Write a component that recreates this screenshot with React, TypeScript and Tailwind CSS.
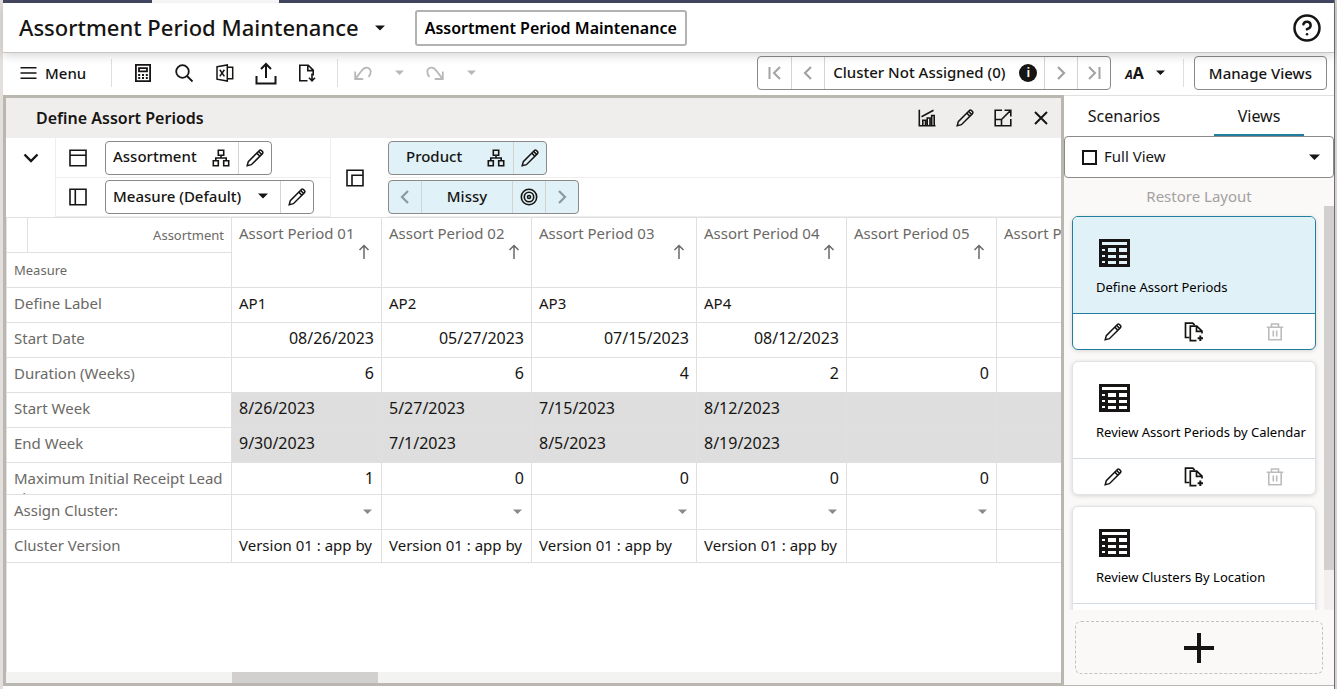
import type { ReactNode } from "react";
import { CircleHelp } from "lucide-react";

type IconProps = { className?: string };

function Svg({ className = "size-5", width = "1.6", children }: IconProps & { width?: string; children: ReactNode }) {
  return (
    <svg viewBox="0 0 20 20" className={`shrink-0 ${className}`} fill="none" stroke="currentColor" strokeWidth={width} aria-hidden="true">
      {children}
    </svg>
  );
}

const Caret = ({ className = "w-[9px]" }: IconProps) => (
  <svg viewBox="0 0 10 6" className={`shrink-0 ${className}`} fill="currentColor" aria-hidden="true">
    <path d="M0 0.5h10L5 5.5z" />
  </svg>
);

const Pencil = ({ className }: IconProps) => (
  <Svg className={className} width="1.5">
    <path d="M2.2 17.8l1.1-4.2L14.4 2.5a1.4 1.4 0 0 1 2 0l1.1 1.1a1.4 1.4 0 0 1 0 2L6.4 16.7z" />
    <path d="M11.8 5.1l3.1 3.1M13.6 3.4l3.1 3.1" />
  </Svg>
);

const Hierarchy = () => (
  <Svg>
    <path d="M7.3 2.3h5.4v5H7.3zM2.3 12.7h5v5h-5zM12.7 12.7h5v5h-5zM10 7.3V10M4.8 12.7V10h10.4v2.7" />
  </Svg>
);

const ChevronLeft = () => (
  <Svg width="2.2">
    <path d="M13 4l-6 6 6 6" />
  </Svg>
);

const ChevronRight = () => (
  <Svg width="2.2">
    <path d="M7 4l6 6-6 6" />
  </Svg>
);

const Calculator = () => (
  <Svg width="1.8">
    <path d="M2.9 1.9h14.2v16.2H2.9z" />
    <path d="M6 5.2h8v3.2H6z" />
    <path d="M5.2 12h2m1.8 0h2m1.8 0h2M5.2 15h2m1.8 0h2m1.8 0h2" />
  </Svg>
);

const Search = () => (
  <Svg width="1.8">
    <circle cx="8.5" cy="8.5" r="6.3" />
    <path d="M13 13l5.5 5.5" />
  </Svg>
);

const Excel = () => (
  <Svg width="1.5">
    <path d="M2 3.8L12.3 2v16L2 16.2zM12.3 4.3h5.4v11.4h-5.4" />
    <path d="M4.8 6.8l4.6 6.6M9.4 6.8l-4.6 6.6" />
  </Svg>
);

const Upload = () => (
  <svg viewBox="0 0 24 24" className="size-6 shrink-0" fill="none" stroke="currentColor" strokeWidth="2" aria-hidden="true">
    <path d="M2.5 15v7.5h19V15M12 17V3M7 8l5-5 5 5" />
  </svg>
);

const DocumentDown = () => (
  <Svg>
    <path d="M10.5 17.7H2.8V2.2h8.4l5 5v5.3M10.8 2.2v5.4h5.4" />
    <path d="M15 10.5v7M12 14.8l3 3 3-3" />
  </Svg>
);

const Undo = () => (
  <Svg width="1.8">
    <path d="M2.2 8.5v7.500h8M2.6 15.600L8 8.500c2-3 4.500-4.500 7-3.700C18.500 6 18.500 10.500 15.500 14" />
  </Svg>
);

const Redo = () => (
  <Svg width="1.8">
    <path d="M17.800 8.500V16h-8M17.400 15.600L12 8.500C10 5.500 7.500 4 5 4.800 1.500 6 1.500 10.500 4.500 14" />
  </Svg>
);

const FirstPage = () => (
  <Svg width="2">
    <path d="M4.500 4v12M15 4l-6 6 6 6" />
  </Svg>
);

const LastPage = () => (
  <Svg width="2">
    <path d="M15.500 4v12M5 4l6 6-6 6" />
  </Svg>
);

const Chart = () => (
  <Svg>
    <path d="M2.300 1.800v15.900h16.200M5.800 17.700v-5.500h2.700v5.500M10.200 17.700V10H13v7.700M14.700 17.700V7.500h2.500v10.200M4.500 8.800L16.500 2.300" />
  </Svg>
);

const Expand = () => (
  <Svg>
    <path d="M9 2.200H2.200v15.600h15.600V11M11.500 2.200h6.300v6.300M17.500 2.500L9 11M2.200 11.500h6.300v6.300" />
  </Svg>
);

const Close = () => (
  <Svg width="2">
    <path d="M4 4l12 12M16 4L4 16" />
  </Svg>
);

const RowsLayout = () => (
  <Svg>
    <path d="M2 2.300h16v15.400H2zM2 7.200h16" />
  </Svg>
);

const ColumnsLayout = () => (
  <Svg>
    <path d="M2 2.300h16v15.400H2zM7.300 2.300v15.400" />
  </Svg>
);

const PageLayout = () => (
  <Svg>
    <path d="M2 2.300h16v15.400H2zM7 17.700V7.300h11" />
  </Svg>
);

const Target = () => (
  <Svg>
    <circle cx="10" cy="10" r="7.700" />
    <circle cx="10" cy="10" r="4.700" />
    <circle cx="10" cy="10" r="1.500" />
  </Svg>
);

const Duplicate = () => (
  <Svg width="1.700">
    <path d="M5.500 15.500H1.500V1.200h7.200l2 2" />
    <path d="M12.500 18.600H6.300V4.200h6.500l5.200 5v2.300M12.500 4.200v5.200H18" />
    <path d="M16.300 13.500v5.400M13.600 16.200h5.400" strokeWidth="2" />
  </Svg>
);

const Trash = () => (
  <Svg>
    <path d="M1.800 5.300h16.400M6.500 5V2h7v3M3.800 5.500v12.200h12.400V5.500M8.300 8.500v6M11.700 8.500v6" />
  </Svg>
);

const TableIcon = () => (
  <svg viewBox="0 0 31 28" className="h-7 w-[31px] shrink-0" shapeRendering="crispEdges" aria-hidden="true">
    <path d="M0 0h31v28H0z" fill="#161513" />
    <path
      d="M3 3h25v3H3zM3 10h3v2H3zM9 9h8v4H9zM20 9h8v4h-8zM3 16h3v2H3zM9 16h8v3H9zM20 16h8v3h-8zM3 22h3v2H3zM9 22h8v3H9zM20 22h8v3h-8z"
      className="fill-current"
    />
  </svg>
);

const outline = "flex h-[34px] items-stretch overflow-hidden rounded-[4px] border border-[#8b8a89]";
const segment = "flex w-[33px] items-center justify-center border-l border-[#d5d3d1]";

function Divider() {
  return <span className="h-7 w-px bg-[#e0dedc]" />;
}

function Header() {
  return (
    <>
      <div className="flex h-[3px] shrink-0 bg-[#454863]">
        <span className="ml-[149px] w-[127px] bg-white" />
      </div>
      <header className="relative z-10 flex h-[50px] shrink-0 items-center border-b border-[#c8c6c4] bg-white px-4 shadow-[0_2px_10px_rgba(0,0,0,0.18)]">
        <h1>
          <button className="flex items-center gap-4 text-[22px] font-medium">
            Assortment Period Maintenance
            <Caret className="w-[10px]" />
          </button>
        </h1>
        <button className="ml-[30px] h-9 rounded-[3px] border-2 border-[#b3b2b1] px-2 text-base font-semibold text-black">
          Assortment Period Maintenance
        </button>
        <button aria-label="Help" className="-mr-2 ml-auto">
          <CircleHelp className="mr-1 size-[30px]" strokeWidth={2} />
        </button>
      </header>
    </>
  );
}

function Toolbar() {
  const tools: [string, ReactNode][] = [
    ["Calculate", <Calculator />],
    ["Search", <Search />],
    ["Export to Excel", <Excel />],
    ["Upload", <Upload />],
    ["Download document", <DocumentDown />],
  ];
  return (
    <div className="flex h-[42px] shrink-0 items-center bg-white pr-[7px] pb-0.5 pl-4">
      <button className="flex items-center gap-1.5 text-[15px] font-medium">
        <Svg>
          <path d="M1.500 4.800h16M1.500 10h16M1.500 15.200h16" />
        </Svg>
        Menu
      </button>
      <div className="ml-[25px] flex items-center">
        <Divider />
        <div className="flex pr-2.5 pl-2.5">
          {tools.map(([label, icon]) => (
            <button key={label} aria-label={label} className="flex h-8 w-[41px] items-center justify-center">
              {icon}
            </button>
          ))}
        </div>
        <Divider />
        <div className="ml-1.5 flex text-[#b9b8b7]">
          <button aria-label="Undo" className="flex h-8 w-[37px] items-center justify-center"><Undo /></button>
          <button aria-label="Undo history" className="flex h-8 w-[37px] items-center justify-center"><Caret /></button>
          <button aria-label="Redo" className="flex h-8 w-[33px] items-center justify-center"><Redo /></button>
          <button aria-label="Redo history" className="flex h-8 w-[41px] items-center justify-center"><Caret /></button>
        </div>
      </div>
      <div className="ml-auto flex items-center">
        <div className={outline}>
          <button aria-label="First" className="flex w-[33px] items-center justify-center text-[#a3a2a1]"><FirstPage /></button>
          <button aria-label="Previous" className={`${segment} text-[#a3a2a1]`}><ChevronLeft /></button>
          <div className="flex w-[220px] items-center border-l border-[#d5d3d1] pr-[7px] pl-2">
            <span className="pb-0.5 text-[15px] font-medium">Cluster Not Assigned (0)</span>
            <button aria-label="Information" className="ml-auto flex size-[18px] items-center justify-center rounded-full bg-[#161513] text-[13px] font-semibold text-white">
              i
            </button>
          </div>
          <button aria-label="Next" className={`${segment} text-[#a3a2a1]`}><ChevronRight /></button>
          <button aria-label="Last" className={`${segment} text-[#a3a2a1]`}><LastPage /></button>
        </div>
        <button aria-label="Text size" className="ml-3.5 flex items-center gap-3">
          <span className="flex items-baseline leading-6 font-bold">
            <span className="text-xs italic">A</span>
            <span className="text-base">A</span>
          </span>
          <Caret />
        </button>
        <div className="mr-2.5 ml-[18px] flex"><Divider /></div>
        <button className="h-[34px] rounded-[4px] border border-[#8b8a89] px-3.5 text-[15px] font-medium">Manage Views</button>
      </div>
    </div>
  );
}

function PanelTitle() {
  const actions: [string, ReactNode][] = [
    ["Chart", <Chart />],
    ["Edit", <Pencil />],
    ["Expand", <Expand />],
    ["Close", <Close />],
  ];
  return (
    <div className="flex h-10 shrink-0 items-center bg-[#f0eeec] pl-[30px]">
      <h2 className="text-base font-semibold">Define Assort Periods</h2>
      <div className="ml-auto flex pr-px">
        {actions.map(([label, icon]) => (
          <button key={label} aria-label={label} className="flex h-8 w-[38px] items-center justify-center">
            {icon}
          </button>
        ))}
      </div>
    </div>
  );
}

function AxisBar() {
  const row = "flex items-center border-b border-[#f0eeec]";
  return (
    <div className="flex shrink-0 text-[15px] font-medium">
      <button aria-label="Collapse" className="flex h-10 w-[49px] items-center justify-center">
        <Svg width="2.400"><path d="M3.500 6.500l6.500 6.500L16.500 6.500" /></Svg>
      </button>
      <div className="w-[275px] border-l border-[#f0eeec]">
        <div className={`${row} h-10 gap-[17px] pl-3`}>
          <RowsLayout />
          <div className={outline}>
            <button className="flex items-center gap-3.5 pr-[7px] pl-[7px]">
              <span className="pb-0.5">Assortment</span>
              <Hierarchy />
            </button>
            <button aria-label="Edit Assortment" className={segment}><Pencil /></button>
          </div>
        </div>
        <div className={`${row} h-[39px] gap-[17px] pl-3`}>
          <ColumnsLayout />
          <div className={outline}>
            <label className="relative flex items-stretch">
              <span className="sr-only">Measure</span>
              <select className="w-[174px] appearance-none pb-0.5 pl-[7px] leading-6">
                <option>Measure (Default)</option>
              </select>
              <Caret className="pointer-events-none absolute top-3 right-3 w-[10px]" />
            </label>
            <button aria-label="Edit Measure" className={segment}><Pencil /></button>
          </div>
        </div>
      </div>
      <div className="flex w-[58px] items-center border-l border-[#f0eeec] pl-3.5">
        <PageLayout />
      </div>
      <div className="flex-1">
        <div className={`${row} h-10`}>
          <div className={`${outline} bg-[#e0f1f7]`}>
            <button className="flex items-center gap-6 pr-[7px] pl-[17px]">
              <span className="pb-0.5">Product</span>
              <Hierarchy />
            </button>
            <button aria-label="Edit Product" className={segment}><Pencil /></button>
          </div>
        </div>
        <div className={`${row} h-[39px]`}>
          <div className={`${outline} bg-[#e0f1f7]`}>
            <button aria-label="Previous product" className="flex w-8 items-center justify-center text-[#8b9a9f]"><ChevronLeft /></button>
            <span className="flex w-[91px] items-center justify-center border-l border-[#c9dade] pb-0.5">Missy</span>
            <button aria-label="Focus" className={segment}><Target /></button>
            <button aria-label="Next product" className={`${segment} text-[#8b9a9f]`}><ChevronRight /></button>
          </div>
        </div>
      </div>
    </div>
  );
}

type Row = {
  label: string;
  values: string[];
  kind?: "number" | "shaded" | "select";
  height?: string;
};

const rows: Row[] = [
  { label: "Define Label", values: ["AP1", "AP2", "AP3", "AP4", "", ""] },
  { label: "Start Date", values: ["08/26/2023", "05/27/2023", "07/15/2023", "08/12/2023", "", ""], kind: "number" },
  { label: "Duration (Weeks)", values: ["6", "6", "4", "2", "0", ""], kind: "number" },
  { label: "Start Week", values: ["8/26/2023", "5/27/2023", "7/15/2023", "8/12/2023", "", ""], kind: "shaded" },
  { label: "End Week", values: ["9/30/2023", "7/1/2023", "8/5/2023", "8/19/2023", "", ""], kind: "shaded" },
  { label: "Maximum Initial Receipt Lead Time", values: ["1", "0", "0", "0", "0", ""], kind: "number", height: "h-[31px]" },
  { label: "Assign Cluster:", values: ["", "", "", "", "", ""], kind: "select" },
  { label: "Cluster Version", values: ["Version 01 : app by", "Version 01 : app by", "Version 01 : app by", "Version 01 : app by", "", ""], height: "h-8" },
];

const kindStyles = {
  number: "text-right text-base leading-5",
  shaded: "bg-[#dedede] text-base leading-5",
  select: "",
};

const periods = ["01", "02", "03", "04", "05", "06"];

function PeriodTable() {
  const line = "border-r border-b border-[#e2e0df] font-normal";
  return (
    <div className="min-h-0 flex-1 overflow-hidden border-t border-l border-[#e2e0df]">
      <table className="w-[1140px] table-fixed border-separate border-spacing-0 text-[15px] leading-5">
        <colgroup>
          <col className="w-[21px]" />
          <col className="w-[204px]" />
          <col className="w-[150px]" />
          <col className="w-[150px]" />
          <col className="w-[165px]" />
          <col className="w-[150px]" />
          <col className="w-[150px]" />
          <col className="w-[150px]" />
        </colgroup>
        <thead className="text-[#6b6966]">
          <tr>
            <td className={`${line} h-[35px] p-0`} />
            <th scope="col" className={`${line} p-0 pr-[7px] text-right text-[13px]`}>Assortment</th>
            {periods.map((p) => (
              <th key={p} scope="col" rowSpan={2} className={`${line} p-0 text-left align-top`}>
                <div className="flex flex-col pt-[5px] pr-[9px] pl-[7px]">
                  <span className="whitespace-nowrap">Assort Period {p}</span>
                  <button aria-label={`Sort Assort Period ${p}`} className="self-end">
                    <svg viewBox="0 0 16 18" className="h-[18px] w-4" fill="none" stroke="currentColor" strokeWidth="1.500" aria-hidden="true">
                      <path d="M8 16V2.500M3.500 7L8 2.500 12.500 7" />
                    </svg>
                  </button>
                </div>
              </th>
            ))}
          </tr>
          <tr>
            <th scope="col" colSpan={2} className={`${line} h-[35px] p-0 pl-[7px] text-left text-[13px]`}>Measure</th>
          </tr>
        </thead>
        <tbody>
          {rows.map((row) => (
            <tr key={row.label}>
              <th scope="row" colSpan={2} className={`${line} p-0 text-left text-[#6b6966]`}>
                <div className={`${row.height ?? "h-[34px]"} overflow-hidden pt-[5px] pr-1 pl-[7px]`}>{row.label}</div>
              </th>
              {row.values.map((value, i) => (
                <td
                  key={i}
                  className={`${line} px-[7px] pt-[5px] pb-0 align-top whitespace-nowrap ${row.kind ? kindStyles[row.kind] : ""}`}
                >
                  {row.kind === "select" && i < 5 ? (
                    <button aria-label={`Assign cluster, period ${i + 1}`} className="flex h-6 w-full items-center justify-end pr-0.5 text-[#8b8a89]">
                      <Caret />
                    </button>
                  ) : (
                    value
                  )}
                </td>
              ))}
            </tr>
          ))}
        </tbody>
      </table>
    </div>
  );
}

function ViewCard({ title, active = false }: { title: string; active?: boolean }) {
  return (
    <article
      className={`shrink-0 overflow-hidden rounded-[6px] border bg-white shadow-[0_1px_4px_rgba(0,0,0,0.15)] ${active ? "border-[#227e9e]" : "border-[#dfe4e8]"}`}
    >
      <button
        className={`flex h-24 w-full flex-col items-start pt-[22px] pl-[23px] text-left text-[13px] leading-5 whitespace-nowrap text-black ${active ? "bg-[#e0f1f7]" : ""}`}
      >
        <span className={`ml-[3px] ${active ? "text-[#e0f1f7]" : "text-white"}`}><TableIcon /></span>
        <span className="mt-2.5">{title}</span>
      </button>
      <div className={`flex h-9 items-center justify-between border-t pr-[30px] pl-[30px] ${active ? "border-[#227e9e]" : "border-[#d3dae0]"}`}>
        <button aria-label={`Edit ${title}`}><Pencil /></button>
        <button aria-label={`Duplicate ${title}`}><Duplicate /></button>
        <button aria-label={`Delete ${title}`} className="text-[#bdbcbb]"><Trash /></button>
      </div>
    </article>
  );
}

function Sidebar() {
  return (
    <aside className="flex w-[270px] shrink-0 flex-col border-t border-b border-t-[#e2e0df] border-b-[#bab6b0] bg-[#fbf9f8]">
      <div role="tablist" className="flex h-10 shrink-0 justify-between bg-white pr-[30px] pl-[15px] text-base">
        <button role="tab" aria-selected="false" className="w-[90px]">Scenarios</button>
        <button role="tab" aria-selected="true" className="w-[90px] border-b-2 border-[#227e9e] pt-0.5">Views</button>
      </div>
      <label className="relative flex h-[42px] shrink-0 items-center">
        <span className="sr-only">View layout</span>
        <select className="h-full w-full appearance-none rounded-[4px] border border-[#8b8a89] bg-white pb-0.5 pl-[39px] text-[15px]">
          <option>Full View</option>
        </select>
        <span className="pointer-events-none absolute left-[18px] size-[15px] border-2 border-[#161513]" />
        <Caret className="pointer-events-none absolute right-3.5 w-[11px]" />
      </label>
      <button className="mt-[7px] h-[21px] shrink-0 text-[15px] leading-5 text-[#a3a19f]">Restore Layout</button>
      <div className="flex min-h-0 flex-1 justify-between overflow-hidden">
        <div className="flex min-w-0 flex-1 flex-col gap-[11px] overflow-hidden px-2 pt-2.5">
          <ViewCard title="Define Assort Periods" active />
          <ViewCard title="Review Assort Periods by Calendar" />
          <ViewCard title="Review Clusters By Location" />
        </div>
        <div className="w-2.5 shrink-0 bg-[#f1f0ef]">
          <div className="h-[90%] bg-[#d2d0cf]" />
        </div>
      </div>
      <button
        aria-label="Add view"
        className="mx-[11px] my-[11px] flex h-[53px] shrink-0 items-center justify-center rounded-[6px] border border-dashed border-[#c4c2c0]"
      >
        <svg viewBox="0 0 30 30" className="size-[30px]" stroke="currentColor" strokeWidth="4" aria-hidden="true">
          <path d="M15 0v30M0 15h30" />
        </svg>
      </button>
    </aside>
  );
}

export default function App() {
  return (
    <div className="flex h-screen bg-white font-['Noto_Sans',sans-serif] text-[#161513]">
      <div className="w-[3px] shrink-0 bg-[#e3dfdc]" />
      <div className="flex min-w-0 flex-1 flex-col pb-[3px]">
        <Header />
        <Toolbar />
        <main className="flex min-h-0 flex-1">
          <section className="flex min-w-0 flex-1 flex-col border-3 border-[#bab6b0] bg-white">
            <PanelTitle />
            <AxisBar />
            <PeriodTable />
            <div className="h-[11px] shrink-0 bg-[#f3f3f2] pl-[226px]">
              <div className="h-full w-[146px] bg-[#d2d0cf]" />
            </div>
          </section>
          <Sidebar />
        </main>
      </div>
      <div className="w-[3px] shrink-0 border-l border-[#6f6e70] bg-[#d5d3d3]" />
    </div>
  );
}
